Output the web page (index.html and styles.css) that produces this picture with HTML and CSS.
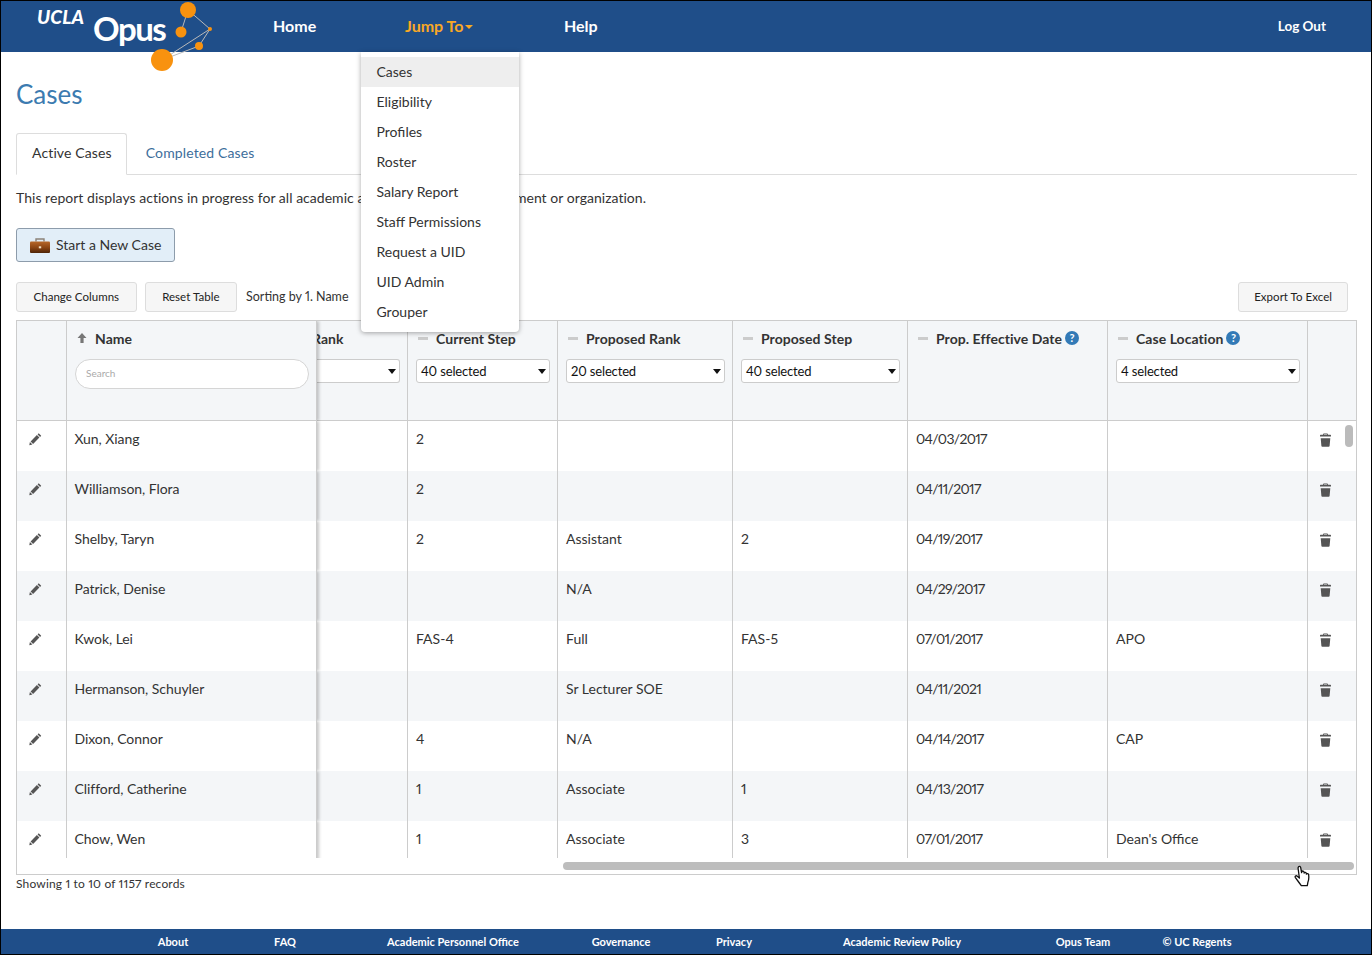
FILE: index.html
```html
<!DOCTYPE html>
<html lang="en">
<head>
<meta charset="utf-8">
<title>Cases</title>
<link rel="stylesheet" href="styles.css">
</head>
<body>
<div class="frame">
<header class="topbar">
  <svg class="logo" width="220" height="75" viewBox="0 0 220 75">
    <text class="logo-ucla" x="37" y="24">UCLA</text>
    <text class="logo-opus" x="93" y="41">Opus</text>
    <g class="logo-lines">
      <line x1="188" y1="10" x2="210" y2="29"/><line x1="188" y1="10" x2="181" y2="32"/>
      <line x1="210" y1="29" x2="162" y2="60"/><line x1="210" y1="29" x2="199" y2="46"/>
      <line x1="199" y1="46" x2="162" y2="60"/>
    </g>
    <g class="logo-dots">
      <circle cx="188" cy="10" r="8"/><circle cx="181" cy="32" r="5.5"/><circle cx="210" cy="29" r="2"/>
      <circle cx="199" cy="46" r="4"/><circle cx="162" cy="60" r="11"/>
    </g>
  </svg>
  <nav class="nav">
    <a class="nav-home">Home</a>
    <a class="nav-jump">Jump To<span class="nav-caret"></span></a>
    <a class="nav-help">Help</a>
  </nav>
  <a class="logout">Log Out</a>
</header>
<ul class="menu">
  <li class="menu-active">Cases</li><li>Eligibility</li><li>Profiles</li><li>Roster</li><li>Salary Report</li><li>Staff Permissions</li><li>Request a UID</li><li>UID Admin</li><li>Grouper</li>
</ul>
<main class="main">
  <h1 class="title">Cases</h1>
  <div class="tabs"><a class="tab tab-active">Active Cases</a><a class="tab tab-other">Completed Cases</a></div>
  <p class="desc">This report displays actions in progress for all academic appointees in your department or organization.</p>
  <button class="btn-new">
    <svg width="20" height="15" viewBox="0 0 20 15"><defs><linearGradient id="case" x1="0" y1="0" x2="0" y2="1"><stop offset="0" stop-color="#b8682a"/><stop offset=".55" stop-color="#8a4413"/><stop offset="1" stop-color="#4f2407"/></linearGradient></defs><path d="M6 3.500V1h8v2.500" fill="none" stroke="#8c8278" stroke-width="1.400"/><rect y="3.500" width="20" height="11.500" rx="1" fill="url(#case)"/><rect x="8.800" y="8.300" width="2.400" height="2" fill="#f3e3c8"/></svg>
    Start a New Case
  </button>
  <div class="toolbar">
    <button class="btn">Change Columns</button>
    <button class="btn">Reset Table</button>
    <span class="sorting">Sorting by 1. Name</span>
    <button class="btn btn-export">Export To Excel</button>
  </div>
  <div class="grid-box">
    <div class="grid-clip">
      <table class="grid">
        <colgroup><col class="c1"><col class="c2"><col class="c3"><col class="c4"><col class="c5"><col class="c6"><col class="c7"><col class="c8"><col class="c9"></colgroup>
        <thead>
          <tr>
            <th></th>
            <th class="frozen">
              <div class="th-label"><svg class="ico-up" width="10" height="10" viewBox="0 0 10 10"><path d="M5 0l4.500 5H6.600v5H3.400V5H.5z"/></svg>Name</div>
              <input class="search" placeholder="Search">
            </th>
            <th class="cut">
              <div class="th-label cut-label">Rank</div>
              <div class="sel sel-cut"><span></span><i class="caret"></i></div>
            </th>
            <th><div class="th-label"><i class="dash"></i>Current Step</div><div class="sel"><span>40 selected</span><i class="caret"></i></div></th>
            <th><div class="th-label"><i class="dash"></i>Proposed Rank</div><div class="sel"><span>20 selected</span><i class="caret"></i></div></th>
            <th><div class="th-label"><i class="dash"></i>Proposed Step</div><div class="sel"><span>40 selected</span><i class="caret"></i></div></th>
            <th><div class="th-label"><i class="dash"></i>Prop. Effective Date<span class="help">?</span></div></th>
            <th><div class="th-label"><i class="dash"></i>Case Location<span class="help">?</span></div><div class="sel"><span>4 selected</span><i class="caret"></i></div></th>
            <th></th>
          </tr>
        </thead>
        <tbody>
          <tr><td><svg class="ico"><use href="#pen"/></svg></td><td class="frozen">Xun, Xiang</td><td></td><td>2</td><td></td><td></td><td class="date">04/03/2017</td><td></td><td><svg class="ico"><use href="#trash"/></svg></td></tr>
          <tr><td><svg class="ico"><use href="#pen"/></svg></td><td class="frozen">Williamson, Flora</td><td></td><td>2</td><td></td><td></td><td class="date">04/11/2017</td><td></td><td><svg class="ico"><use href="#trash"/></svg></td></tr>
          <tr><td><svg class="ico"><use href="#pen"/></svg></td><td class="frozen">Shelby, Taryn</td><td></td><td>2</td><td>Assistant</td><td>2</td><td class="date">04/19/2017</td><td></td><td><svg class="ico"><use href="#trash"/></svg></td></tr>
          <tr><td><svg class="ico"><use href="#pen"/></svg></td><td class="frozen">Patrick, Denise</td><td></td><td></td><td>N/A</td><td></td><td class="date">04/29/2017</td><td></td><td><svg class="ico"><use href="#trash"/></svg></td></tr>
          <tr><td><svg class="ico"><use href="#pen"/></svg></td><td class="frozen">Kwok, Lei</td><td></td><td>FAS-4</td><td>Full</td><td>FAS-5</td><td class="date">07/01/2017</td><td>APO</td><td><svg class="ico"><use href="#trash"/></svg></td></tr>
          <tr><td><svg class="ico"><use href="#pen"/></svg></td><td class="frozen">Hermanson, Schuyler</td><td></td><td></td><td>Sr Lecturer SOE</td><td></td><td class="date">04/11/2021</td><td></td><td><svg class="ico"><use href="#trash"/></svg></td></tr>
          <tr><td><svg class="ico"><use href="#pen"/></svg></td><td class="frozen">Dixon, Connor</td><td></td><td>4</td><td>N/A</td><td></td><td class="date">04/14/2017</td><td>CAP</td><td><svg class="ico"><use href="#trash"/></svg></td></tr>
          <tr><td><svg class="ico"><use href="#pen"/></svg></td><td class="frozen">Clifford, Catherine</td><td></td><td>1</td><td>Associate</td><td>1</td><td class="date">04/13/2017</td><td></td><td><svg class="ico"><use href="#trash"/></svg></td></tr>
          <tr><td><svg class="ico"><use href="#pen"/></svg></td><td class="frozen">Chow, Wen</td><td></td><td>1</td><td>Associate</td><td>3</td><td class="date">07/01/2017</td><td>Dean's Office</td><td><svg class="ico"><use href="#trash"/></svg></td></tr>
        </tbody>
      </table>
      <div class="vthumb"></div>
    </div>
    <div class="hscroll"><div class="hthumb"></div></div>
    <svg class="hand" width="18" height="22" viewBox="0 0 18 22"><path d="M4.500 1.800c.9-.9 2-.4 2.200.8l.9 5 .3-1c.6-1 1.900-.7 2.100.4l.2 1c.5-1 1.900-.8 2.100.3l.1.800c.6-.8 2-.5 2.200.6.400 2.400.300 5-.700 7.500l-.6 3.500H7.300L5 17.500 1.400 12.700c-.8-1.300.6-2.600 1.900-1.500l2.100 1.800-1.300-9.500c-.1-.8.100-1.300.4-1.700z" fill="#fff" stroke="#111" stroke-width="1.300" stroke-linejoin="round"/></svg>
  </div>
  <p class="records">Showing 1 to 10 of 1157 records</p>
</main>
<footer class="footer">
  <a>About</a><a>FAQ</a><a>Academic Personnel Office</a><a>Governance</a><a>Privacy</a><a>Academic Review Policy</a><a>Opus Team</a><a>© UC Regents</a>
</footer>
</div>
<svg class="defs" width="0" height="0">
  <symbol id="pen" viewBox="0 0 13 13"><path d="M9.700.8l2.500 2.500-1.100 1.100-2.500-2.500zM7.900 2.600l2.500 2.500-6.300 6.300-2.500-2.500zM.9 9.600l2.500 2.500-3.100.6z"/></symbol>
  <symbol id="trash" viewBox="0 0 12 14"><path d="M4.300.6h3.400c.4 0 .6.200.7.600v.6h2.500c.4 0 .6.200.6.600v1.100H.5V2.400c0-.4.200-.6.600-.6h2.500v-.6c0-.4.300-.6.700-.6zM4.500 1.200v.6h3v-.6zM1.200 5.200h9.600l-.7 7.800c-.1.500-.4.800-.9.800H2.800c-.5 0-.8-.3-.9-.8z"/></symbol>
</svg>
</body>
</html>
```
FILE: styles.css
```css
* { box-sizing: border-box; }
html, body { margin: 0; padding: 0; }
body { font-family: Lato, "Liberation Sans", sans-serif; font-size: 14px; color: #333; background: #fff; font-variant-numeric: proportional-nums; }
.frame { position: relative; width: 1372px; height: 955px; border: 1px solid #000; display: flex; flex-direction: column; overflow: hidden; }
.defs { position: absolute; }

.topbar { position: relative; flex: none; height: 51px; padding-bottom: 2px; background: #1f4e89; display: flex; align-items: center; color: #fff; font-weight: 700; font-size: 16px; }
.logo { position: absolute; left: -1px; top: -1px; overflow: visible; z-index: 5; }
.logo-ucla { font: italic 900 19px Lato, sans-serif; fill: #fff; letter-spacing: .1px; }
.logo-opus { font: 700 33px Lato, sans-serif; fill: #fff; letter-spacing: -1.500px; }
.logo-lines line { stroke: #b9b9b9; stroke-width: 1; }
.logo-dots circle { fill: #f8920f; }
.nav { display: flex; padding-left: 272px; }
.nav-home { width: 132px; }
.nav-jump { width: 159px; color: #f9a825; }
.nav-caret { display: inline-block; width: 0; height: 0; margin-left: 2px; vertical-align: 3px; border: 4px solid transparent; border-top-color: #f9a825; border-bottom: 0; }
.logout { margin-left: auto; margin-right: 45px; font-size: 13.500px; }

.menu { position: absolute; left: 360px; top: 51px; z-index: 10; width: 158px; height: 280px; margin: 0; padding: 5px 0 0; list-style: none; background: #fff; border-radius: 0 0 4px 4px; box-shadow: 0 1px 5px rgba(0,0,0,.35); }
.menu li { height: 30px; line-height: 30px; padding-left: 15.500px; color: #333; }
.menu-active { background: #eee; }

.main { flex: 1; padding: 0 14px 0 15px; min-height: 0; }
.title { margin: 26px 0 0; font-size: 26px; line-height: 32px; font-weight: 400; color: #3c7bb0; }
.tabs { display: flex; height: 42px; margin-top: 23px; border-bottom: 1px solid #ddd; }
.tab { height: 41px; line-height: 40px; padding: 0 15px; color: #3d6e9b; letter-spacing: .13px; }
.tab-active { height: 42px; line-height: 38px; padding-right: 14px; color: #333; border: 1px solid #ddd; border-bottom-color: #fff; border-radius: 3px 3px 0 0; background: #fff; }
.tab-other { margin-left: 4px; }
.desc { margin: 14px 0 0; line-height: 18px; letter-spacing: .03px; }
.btn-new { display: flex; align-items: center; gap: 6px; margin-top: 21px; width: 159px; height: 34px; padding: 0 0 2px 13px; font: 14px Lato, sans-serif; color: #333; background: #e2eef8; border: 1px solid #8d9cab; border-radius: 3px; }
.btn-new svg { margin-top: 2px; }
.toolbar { display: flex; align-items: center; margin-top: 20px; height: 30px; }
.btn { height: 30px; padding: 0 16.500px 2px; font: 11.500px Lato, sans-serif; letter-spacing: .03px; color: #222; background: #f6f6f6; border: 1px solid #ddd; border-radius: 3px; margin-right: 8px; }
.sorting { margin-left: 1px; font-size: 12.500px; padding-bottom: 1px; }
.btn.btn-export { margin-left: auto; margin-right: 9px; padding-left: 15px; padding-right: 15px; }

.grid-box { position: relative; margin-top: 8px; width: 1341px; border: 1px solid #ccc; }
.grid-clip { position: relative; height: 537px; overflow: hidden; }
.grid { table-layout: fixed; width: 1339px; border-collapse: separate; border-spacing: 0; }
.c1 { width: 50px; } .c2 { width: 250px; } .c3 { width: 91px; } .c4 { width: 150px; } .c5, .c6 { width: 175px; } .c7, .c8 { width: 200px; } .c9 { width: 48px; }
.grid th { height: 100px; vertical-align: top; text-align: left; padding: 8px 7px 0 8px; background: #f4f6f8; border-right: 1px solid #ccc; border-bottom: 1px solid #ccc; font-weight: 700; color: #333; overflow: hidden; }
.grid th:last-child, .grid td:last-child { border-right: 0; }
.grid td { height: 50px; vertical-align: top; padding: 9px 8px 0; line-height: 18px; border-right: 1px solid #ccc; }
.grid td.date { letter-spacing: -.68px; }
.grid tbody tr:nth-child(even) td { background: #f4f6f8; }
.grid td:first-child { padding: 11px 0 0 12px; }
.grid td:last-child { padding: 12px 0 0 11px; }
.grid .frozen { position: relative; z-index: 2; padding-left: 8px; border-right: 1px solid #ccc; box-shadow: 2px 0 3px rgba(0,0,0,.22); clip-path: inset(0 -6px 0 0); }
.grid td.frozen { padding-left: 7.500px; letter-spacing: -.05px; }
.th-label { display: flex; align-items: center; height: 18px; white-space: nowrap; letter-spacing: .05px; }
.ico-up { fill: #777; margin: 0 8px 0 2px; }
.dash { width: 10px; height: 3px; background: #ccc; margin: 0 8px 0 2px; flex: none; }
.help { width: 14px; height: 14px; margin-left: 3px; border-radius: 50%; background: #337ab7; color: #fff; font-size: 11px; line-height: 14px; text-align: center; letter-spacing: 0; }
.search { display: block; width: 234px; height: 30px; margin-top: 12px; padding: 0 10px 2px; border: 1px solid #d5d5d5; border-radius: 15px; font: 10px Lato, sans-serif; background: #fff; }
.search::placeholder { color: #aaa; }
.sel { display: flex; align-items: center; justify-content: space-between; height: 24px; margin-top: 12px; padding: 0 3px 0 4px; background: #fff; border: 1px solid #ccc; border-radius: 3px; font-weight: 400; font-size: 13px; letter-spacing: -.15px; color: #111; }
.caret { width: 0; height: 0; border: 4px solid transparent; border-top: 5px solid #111; border-bottom: 0; }
.grid th.cut { padding-left: 0; }
.cut-label { margin-left: -5px; }
.sel-cut { width: 83px; border-left: 0; border-radius: 0 3px 3px 0; }
.ico { display: block; width: 13px; height: 14px; fill: #555; }
.vthumb { position: absolute; left: 1328px; top: 104px; width: 8px; height: 22px; border-radius: 4px; background: #bbb; }
.hscroll { position: relative; height: 16px; }
.hthumb { position: absolute; left: 546px; top: 4px; width: 791px; height: 8px; border-radius: 4px; background: #bdbdbd; }
.hand { position: absolute; left: 1277px; top: 544px; z-index: 3; }
.records { margin: 1px 0 0; font-size: 12px; line-height: 16px; letter-spacing: .16px; }

.footer { flex: none; height: 25px; display: grid; grid-template-columns: 112px 112px 224px 112px 114px 222px 140px 88px; padding-left: 116px; background: #1f4e89; color: #fff; font-size: 11px; font-weight: 700; line-height: 25px; text-align: center; }
```
